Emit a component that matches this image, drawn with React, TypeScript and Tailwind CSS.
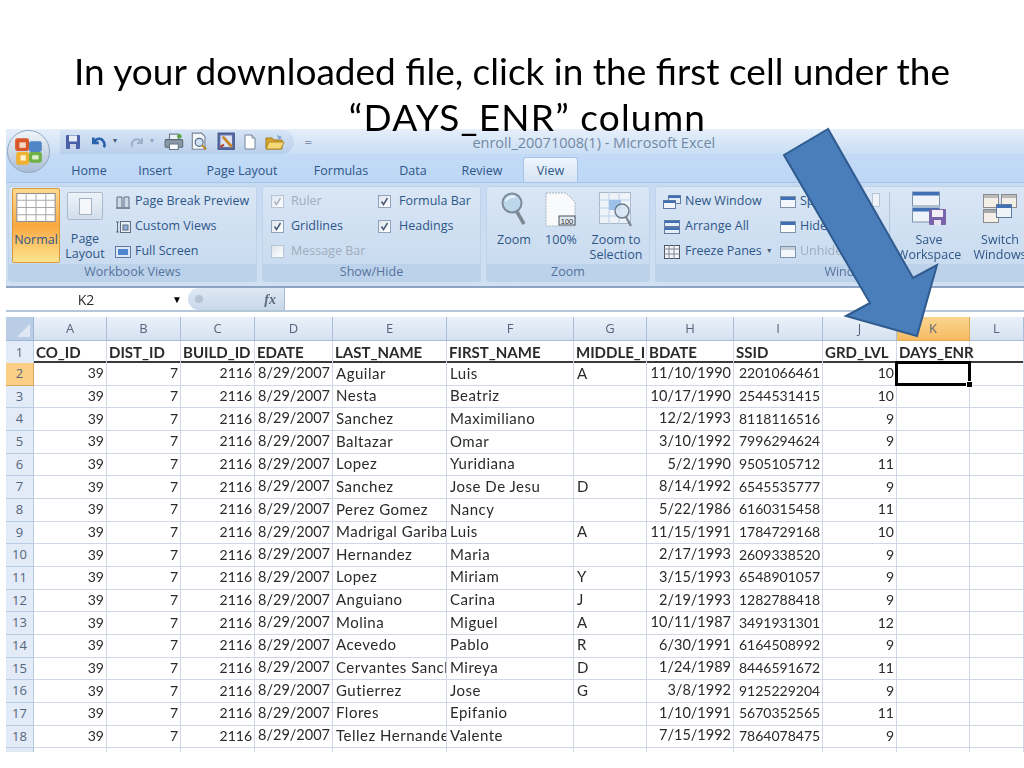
import type { ReactNode } from 'react';

const COLS = ['A', 'B', 'C', 'D', 'E', 'F', 'G', 'H', 'I', 'J', 'K', 'L'];
const HEAD = ['CO_ID', 'DIST_ID', 'BUILD_ID', 'EDATE', 'LAST_NAME', 'FIRST_NAME', 'MIDDLE_I', 'BDATE', 'SSID', 'GRD_LVL', 'DAYS_ENR', ''];
const GRID = 'grid grid-cols-[28px_73px_74px_74px_78px_114px_127px_73px_87px_89px_74px_73px_54px]';

// last, first, middle, birth date, ssid, grade
const ROWS: [string, string, string, string, string, string][] = [
  ['Aguilar', 'Luis', 'A', '11/10/1990', '2201066461', '10'],
  ['Nesta', 'Beatriz', '', '10/17/1990', '2544531415', '10'],
  ['Sanchez', 'Maximiliano', '', '12/2/1993', '8118116516', '9'],
  ['Baltazar', 'Omar', '', '3/10/1992', '7996294624', '9'],
  ['Lopez', 'Yuridiana', '', '5/2/1990', '9505105712', '11'],
  ['Sanchez', 'Jose De Jesu', 'D', '8/14/1992', '6545535777', '9'],
  ['Perez Gomez', 'Nancy', '', '5/22/1986', '6160315458', '11'],
  ['Madrigal Gariba', 'Luis', 'A', '11/15/1991', '1784729168', '10'],
  ['Hernandez', 'Maria', '', '2/17/1993', '2609338520', '9'],
  ['Lopez', 'Miriam', 'Y', '3/15/1993', '6548901057', '9'],
  ['Anguiano', 'Carina', 'J', '2/19/1993', '1282788418', '9'],
  ['Molina', 'Miguel', 'A', '10/11/1987', '3491931301', '12'],
  ['Acevedo', 'Pablo', 'R', '6/30/1991', '6164508992', '9'],
  ['Cervantes Sanchez', 'Mireya', 'D', '1/24/1989', '8446591672', '11'],
  ['Gutierrez', 'Jose', 'G', '3/8/1992', '9125229204', '9'],
  ['Flores', 'Epifanio', '', '1/10/1991', '5670352565', '11'],
  ['Tellez Hernandez', 'Valente', '', '7/15/1992', '7864078475', '9'],
];

function Icon({ w = 16, h = 16, s = 1, className = '', children }: { w?: number; h?: number; s?: number; className?: string; children: ReactNode }) {
  return (
    <svg width={w * s} height={h * s} viewBox={`0 0 ${w} ${h}`} className={`shrink-0 ${className}`}>
      {children}
    </svg>
  );
}

function OfficeButton() {
  return (
    <div className="w-[43px] h-[43px] rounded-full bg-gradient-to-b from-[#f1f5f9] to-[#a9bdd4] border border-[#8ea6c2] flex items-center justify-center">
      <svg width="32" height="32" viewBox="0 0 30 30">
        <rect x="2" y="2" width="13" height="12" rx="2" fill="#d9582a" />
        <rect x="15" y="5" width="12" height="10" rx="2" fill="#4f86c6" />
        <rect x="3" y="15" width="12" height="12" rx="2" fill="#f0b030" />
        <rect x="15" y="15" width="12" height="10" rx="2" fill="#6fb045" />
        <rect x="6" y="6" width="6" height="5" fill="#f6d9c8" />
        <rect x="7" y="18" width="5" height="5" fill="#fff3cf" />
        <rect x="18" y="18" width="6" height="4" fill="#dcefc8" />
      </svg>
    </div>
  );
}

function QuickAccess() {
  return (
    <div className="ml-[54px] h-[24px] w-[234px] rounded-r-[14px] bg-gradient-to-b from-[#d6e4f5] to-[#b9cfea] flex items-center">
      <Icon className="ml-[5px]">
        <rect x="1" y="1" width="14" height="14" rx="1" fill="#4a5fa8" />
        <rect x="4" y="1.5" width="8" height="6" fill="#e8eef8" />
        <rect x="5" y="10" width="6" height="5" fill="#c9d3e8" />
      </Icon>
      <Icon s={1.1} className="ml-[9px]">
        <path d="M3 4v5h5M3.5 8.5C6 4 11 4 13 9c.5 1.5.3 3-.5 4" fill="none" stroke="#2b62ad" strokeWidth="2.4" />
      </Icon>
      <span className="ml-[4px] text-[7px] text-[#4b5f7a]">▼</span>
      <Icon className="ml-[10px]">
        <path d="M13 4v5H8M12.5 8.5C10 4 5 4 3 9c-.5 1.5-.3 3 .5 4" fill="none" stroke="#9db0c8" strokeWidth="2" />
      </Icon>
      <span className="ml-[4px] text-[7px] text-[#94a6bd]">▼</span>
      <Icon w={18} s={1.1} className="ml-[9px]">
        <rect x="5" y="1" width="8" height="5" fill="#eef2f6" stroke="#6b7787" />
        <rect x="1" y="6" width="16" height="7" rx="1" fill="#8b98a6" stroke="#5e6a78" />
        <rect x="5" y="10" width="8" height="5" fill="#fff" stroke="#6b7787" />
        <circle cx="14" cy="3" r="2" fill="#58a13c" />
      </Icon>
      <Icon s={1.15} className="ml-[6px]">
        <path d="M2 1h8l3 3v11H2z" fill="#f6f7fa" stroke="#7a8698" />
        <circle cx="8" cy="9" r="3.5" fill="#cfe1f5" stroke="#546a86" />
        <path d="M10.5 11.5L14 15" stroke="#b88a2d" strokeWidth="2" />
      </Icon>
      <Icon s={1.15} className="ml-[8px]">
        <rect x="1" y="1" width="14" height="14" fill="#5c70aa" stroke="#3d4e82" />
        <rect x="3" y="3" width="10" height="10" fill="#dbe4f4" />
        <path d="M5 4l8 9" stroke="#c9862a" strokeWidth="2.5" />
        <path d="M3 13l3-2" stroke="#b9412a" strokeWidth="2" />
      </Icon>
      <Icon className="ml-[7px]">
        <path d="M3 1h7l3 3v11H3z" fill="#fff" stroke="#75839a" />
        <path d="M10 1v3h3" fill="#d6dde8" stroke="#75839a" />
      </Icon>
      <Icon w={20} className="ml-[7px]">
        <path d="M1 4h6l2 2h8v9H1z" fill="#d6a62e" stroke="#a57c1c" />
        <path d="M4 8h15l-3 7H1z" fill="#f6d877" stroke="#b08a28" />
        <path d="M12 1l5 2-3 3" fill="#7da7d8" />
      </Icon>
    </div>
  );
}

function Tab({ label, w, active }: { label: string; w: string; active?: boolean }) {
  return (
    <div
      className={`${w} h-[25px] pt-[3px] flex items-center justify-center text-[12.5px] text-[#2e5688] rounded-t-[3px] ${
        active ? 'bg-gradient-to-b from-[#eef5fd] to-[#d5e4f5] border border-b-0 border-[#a5c3e6]' : ''
      }`}
    >
      {label}
    </div>
  );
}

function Group({ label, w, children }: { label: string; w: string; children: ReactNode }) {
  return (
    <div className={`${w} shrink-0 h-[96px] flex flex-col rounded-[3px] border border-[#c0d2e7] bg-gradient-to-b from-[#d9e6f5] to-[#c6d9ef] overflow-hidden`}>
      <div className="h-[77px] flex">{children}</div>
      <div className="h-[17px] bg-[#bcd2ea] flex items-center justify-center text-[12.5px] leading-none text-[#56739c]">{label}</div>
    </div>
  );
}

function ListItem({ icon, label, dim }: { icon: ReactNode; label: string; dim?: boolean }) {
  return (
    <div className={`h-[25px] flex items-center gap-[4px] whitespace-nowrap text-[12.5px] ${dim ? 'text-[#9fadbe]' : 'text-[#2e5688]'}`}>
      {icon}
      <span>{label}</span>
    </div>
  );
}

function Check({ on, dim }: { on?: boolean; dim?: boolean }) {
  return (
    <div className={`w-[13px] h-[13px] border bg-gradient-to-br from-[#dfe6ef] to-white flex items-center justify-center ${dim ? 'border-[#b7c4d4]' : 'border-[#8fa3bc]'}`}>
      {on && (
        <svg width="9" height="9" viewBox="0 0 9 9">
          <path d="M1.5 4.5l2 3 4-6.5" fill="none" stroke={dim ? '#aab6c4' : '#4a5d78'} strokeWidth="1.5" />
        </svg>
      )}
    </div>
  );
}

function BigLabel({ lines, w }: { lines: string[]; w: string }) {
  return (
    <div className={`${w} text-center text-[12.5px] leading-[15px] text-[#2e5688] whitespace-nowrap`}>
      {lines.map((l) => (
        <div key={l}>{l}</div>
      ))}
    </div>
  );
}

function WinIcon({ head = '#3f6fb5', body = '#f3f6fb' }: { head?: string; body?: string }) {
  return (
    <Icon>
      <rect x="0.5" y="2.5" width="15" height="11" fill={body} stroke="#7f93ad" />
      <rect x="1" y="3" width="14" height="3" fill={head} />
    </Icon>
  );
}

function Ribbon() {
  return (
    <div className="h-[105px] bg-gradient-to-b from-[#c5dbf3] to-[#d0e0f2] flex gap-[5px] pl-[2px] pt-[3px] border-b-[2px] border-[#8da5c0]">
      <Group label="Workbook Views" w="w-[249px]">
        <div className="ml-[3px] mt-[1px] w-[48px] h-[75px] rounded-[2px] border border-[#d99a3c] bg-gradient-to-b from-[#fbd98f] via-[#f8a83e] to-[#fde38f] flex flex-col items-center">
          <svg width="40" height="29" viewBox="0 0 38 28" className="mt-[4px]">
            <rect x="0.5" y="0.5" width="37" height="27" fill="#fff" stroke="#8d8d8d" />
            <path d="M0 7h38M0 14h38M0 21h38M9.5 0v28M19 0v28M28.5 0v28" stroke="#a9a9a9" />
          </svg>
          <span className="mt-[9px] text-[12.5px] text-[#2e5688]">Normal</span>
        </div>
        <div className="ml-[5px] mt-[1px] w-[40px] flex flex-col items-center">
          <div className="mt-[4px] w-[36px] h-[28px] rounded-[2px] border border-[#aab9cb] bg-gradient-to-b from-[#eef3f9] to-[#d2deec] flex items-center justify-center">
            <div className="w-[13px] h-[17px] bg-[#f5f7fa] border border-[#a5b2c2]" />
          </div>
          <BigLabel lines={['Page', 'Layout']} w="mt-[11px]" />
        </div>
        <div className="ml-[10px] mt-[2px] flex flex-col">
          <ListItem
            label="Page Break Preview"
            icon={
              <Icon>
                <path d="M2 13V3h5v10M9 13V3h5v10" fill="#cfd9e6" stroke="#5d6c80" />
                <path d="M1 14h14" stroke="#5d6c80" strokeWidth="1.5" />
              </Icon>
            }
          />
          <ListItem
            label="Custom Views"
            icon={
              <Icon>
                <path d="M1 3h3M1 13h3M2.5 3v10" stroke="#5d6c80" />
                <rect x="5.5" y="2.5" width="10" height="11" fill="#e8eef6" stroke="#5d6c80" />
                <rect x="8" y="6" width="5" height="5" fill="#8fb0d8" stroke="#5d6c80" />
              </Icon>
            }
          />
          <ListItem
            label="Full Screen"
            icon={
              <Icon>
                <rect x="0.5" y="2.5" width="15" height="11" fill="#dfe8f4" stroke="#5d7aa5" />
                <rect x="3" y="5" width="10" height="6" fill="#4d86cf" />
              </Icon>
            }
          />
        </div>
      </Group>
      <Group label="Show/Hide" w="w-[219px]">
        <div className="ml-[8px] mt-[2px] w-[107px] flex flex-col">
          <ListItem dim label="Ruler" icon={<div className="mr-[3px]"><Check on dim /></div>} />
          <ListItem label="Gridlines" icon={<div className="mr-[3px]"><Check on /></div>} />
          <ListItem dim label="Message Bar" icon={<div className="mr-[3px]"><Check dim /></div>} />
        </div>
        <div className="mt-[2px] flex flex-col">
          <ListItem label="Formula Bar" icon={<div className="mr-[4px]"><Check on /></div>} />
          <ListItem label="Headings" icon={<div className="mr-[4px]"><Check on /></div>} />
        </div>
      </Group>
      <Group label="Zoom" w="w-[164px]">
        <div className="flex pt-[5px] pl-[8px]">
          <div className="w-[38px] flex flex-col items-center">
            <svg width="26" height="36" viewBox="0 0 26 36">
              <circle cx="11" cy="11" r="9.5" fill="#bcd6ea" stroke="#7d8b99" strokeWidth="2" />
              <path d="M5 9a7 6 0 0 1 9-4" fill="none" stroke="#eef6fb" strokeWidth="2" />
              <path d="M16 20l7 12" stroke="#7c8794" strokeWidth="3.5" />
            </svg>
            <BigLabel lines={['Zoom']} w="mt-[4px]" />
          </div>
          <div className="ml-[9px] w-[38px] flex flex-col items-center">
            <svg width="32" height="36" viewBox="0 0 32 36">
              <path d="M1 1h20l9 9v24H1z" fill="#f8fafc" stroke="#a9b3bf" strokeDasharray="2 1" />
              <rect x="14" y="24" width="16" height="9" fill="#e2e8ef" stroke="#4b5563" />
              <text x="22" y="31.5" textAnchor="middle" fontSize="7.5" fill="#333" fontFamily="'Liberation Sans', sans-serif">100</text>
            </svg>
            <BigLabel lines={['100%']} w="mt-[4px]" />
          </div>
          <div className="ml-[6px] w-[60px] flex flex-col items-center">
            <svg width="34" height="36" viewBox="0 0 34 36">
              <rect x="0.5" y="0.5" width="31" height="31" fill="#eef3f9" stroke="#a9b7c8" />
              <path d="M0 8h32M0 16h32M0 24h32M10 0v32M20 0v32" stroke="#bcd0e8" />
              <rect x="10" y="8" width="12" height="10" fill="#9cc0ea" />
              <circle cx="23" cy="19" r="7" fill="#d7e6f3" fillOpacity="0.8" stroke="#6e7c8b" strokeWidth="1.5" />
              <path d="M27 25l5 9" stroke="#7c8794" strokeWidth="2.5" />
            </svg>
            <BigLabel lines={['Zoom to', 'Selection']} w="mt-[4px]" />
          </div>
        </div>
      </Group>
      <Group label="Window" w="w-[386px]">
        <div className="ml-[7px] mt-[2px] w-[117px] flex flex-col">
          <ListItem
            label="New Window"
            icon={
              <Icon w={18}>
                <rect x="5.5" y="1.5" width="12" height="8" fill="#e4ecf6" stroke="#5d7aa5" />
                <rect x="6" y="2" width="11" height="2" fill="#3f6fb5" />
                <rect x="0.5" y="6.5" width="12" height="8" fill="#f2f5fa" stroke="#5d7aa5" />
                <rect x="1" y="7" width="11" height="2" fill="#3f6fb5" />
              </Icon>
            }
          />
          <ListItem
            label="Arrange All"
            icon={
              <Icon w={18}>
                <rect x="1.5" y="1.5" width="15" height="6" fill="#e4ecf6" stroke="#5d7aa5" />
                <rect x="2" y="2" width="14" height="2" fill="#3f6fb5" />
                <rect x="1.5" y="8.5" width="15" height="6" fill="#e4ecf6" stroke="#5d7aa5" />
                <rect x="2" y="9" width="14" height="2" fill="#3f6fb5" />
              </Icon>
            }
          />
          <div className="flex items-center">
            <ListItem
              label="Freeze Panes"
              icon={
                <Icon w={18}>
                  <rect x="1.5" y="1.5" width="15" height="13" fill="#f2f5fa" stroke="#4b5563" />
                  <path d="M1 5h16M1 10h16M6 1v14M11 1v14" stroke="#7d8794" />
                </Icon>
              }
            />
            <span className="ml-[4px] text-[7px] text-[#4b5f7a]">▼</span>
          </div>
        </div>
        <div className="mt-[2px] w-[92px] flex flex-col">
          <ListItem label="Split" icon={<WinIcon />} />
          <ListItem label="Hide" icon={<WinIcon body="#fbfcfe" />} />
          <ListItem dim label="Unhide" icon={<WinIcon head="#c5cdd8" />} />
        </div>
        <div className="mt-[6px] w-[8px] h-[14px] bg-[#eef3f9] border border-[#b6c4d5]" />
        <div className="ml-[9px] mt-[5px] h-[66px] w-px bg-[#b3c6dc]" />
        <div className="pt-[4px] flex">
          <div className="ml-[7px] w-[64px] flex flex-col items-center">
            <svg width="36" height="34" viewBox="0 0 36 34">
              <rect x="1.5" y="1" width="27" height="14" fill="#eef3f9" stroke="#7f93ad" />
              <rect x="2" y="1" width="26" height="3.5" fill="#3f6fb5" />
              <rect x="1.5" y="17" width="27" height="14" fill="#eef3f9" stroke="#7f93ad" />
              <rect x="2" y="17" width="26" height="3.5" fill="#3f6fb5" />
              <rect x="18" y="18" width="17" height="16" rx="1" fill="#7a62ad" />
              <rect x="21" y="19" width="11" height="7" fill="#f0edf7" />
              <rect x="23" y="29" width="7" height="5" fill="#e8e4f2" />
            </svg>
            <BigLabel lines={['Save', 'Workspace']} w="mt-[7px]" />
          </div>
          <div className="ml-[7px] w-[64px] flex flex-col items-center">
            <svg width="34" height="34" viewBox="0 0 34 34">
              <rect x="0.5" y="3.5" width="15" height="13" fill="#f3efe6" stroke="#8b8b8b" />
              <rect x="18.5" y="3.5" width="15" height="13" fill="#f3efe6" stroke="#8b8b8b" />
              <rect x="0.5" y="18.5" width="15" height="13" fill="#f3efe6" stroke="#8b8b8b" />
              <rect x="1" y="4" width="14" height="3" fill="#b9b9b9" />
              <rect x="19" y="4" width="14" height="3" fill="#b9b9b9" />
              <rect x="1" y="19" width="14" height="3" fill="#a8a8a8" />
              <rect x="13.5" y="13.5" width="15" height="13" fill="#eef3f9" stroke="#5d7aa5" />
              <rect x="14" y="14" width="14" height="3" fill="#3f6fb5" />
            </svg>
            <BigLabel lines={['Switch', 'Windows']} w="mt-[7px]" />
          </div>
        </div>
      </Group>
    </div>
  );
}

function FormulaBar() {
  return (
    <div className="h-[24px] flex bg-white border-b-[2px] border-[#b4c6da]">
      <div className="w-[182px] flex items-center text-[14px] text-[#2c2c2c]">
        <span className="w-[160px] pt-[1px] text-center">K2</span>
        <span className="ml-[6px] text-[10px] text-black">▼</span>
      </div>
      <div className="w-[97px] h-[22px] rounded-l-[12px] border-r border-[#a9bbd0] bg-gradient-to-b from-[#dfe8f4] to-[#c8d8ea] flex items-center justify-between pl-[7px] pr-[8px]">
        <span className="w-[8px] h-[8px] rounded-full bg-[#b9c4d1]" />
        <span className="font-['Liberation_Serif',serif] italic font-bold text-[14px] text-[#5a6a7c]">fx</span>
      </div>
    </div>
  );
}

function RowHead({ n, active }: { n: number; active?: boolean }) {
  return (
    <div
      className={`flex items-center justify-center font-['Open_Sans',sans-serif] text-[13px] text-[#56667a] border-r border-b ${
        active ? 'bg-[#fbcf85] border-[#e0a95a]' : 'bg-[#e2ebf7] border-[#b9cce3]'
      }`}
    >
      {n}
    </div>
  );
}

type CellProps = { children?: ReactNode; className?: string; selected?: boolean };

function Cell({ children, className = 'pl-[3px]', selected }: CellProps) {
  return (
    <div className={`relative flex items-center whitespace-nowrap border-r border-b border-[#d0d7e5] ${className} ${selected ? 'overflow-visible' : 'overflow-hidden'}`}>
      {children}
      {selected && (
        <div className="absolute z-10 -left-[2px] -top-[2px] -right-[2px] -bottom-px border-[3px] border-black">
          <div className="absolute -right-[5px] -bottom-[5px] w-[7px] h-[7px] bg-black border border-white" />
        </div>
      )}
    </div>
  );
}

const NUM = 'justify-end pr-[2px] pb-[2px]';
const DATE = 'justify-end pr-[2px] pb-[2px] text-[14.5px]';
const NAME = 'pl-[3px] pb-[2px] text-[15px] tracking-[0.5px]';

function Sheet() {
  return (
    <div className="font-['Lato',sans-serif] text-[14px] text-[#2a2a2a]">
      <div className={`${GRID} h-[24px] font-['Open_Sans',sans-serif] text-[13px] text-[#56667a]`}>
        <div className="bg-[#b9cde6] border-r border-b border-[#9fb6d3] flex items-end justify-end p-[3px]">
          <div className="w-0 h-0 border-l-[13px] border-l-transparent border-b-[13px] border-b-[#dfe8f3]" />
        </div>
        {COLS.map((c) => (
          <div
            key={c}
            className={`flex items-center justify-center border-r border-b ${
              c === 'K'
                ? 'bg-gradient-to-b from-[#fbd58f] to-[#f6bb62] border-[#e0a95a]'
                : 'bg-gradient-to-b from-[#eaf1fa] to-[#d5e1f0] border-[#a9bdd6]'
            }`}
          >
            {c}
          </div>
        ))}
      </div>
      <div className={`${GRID} h-[22px] border-b-[2px] border-[#3a3a3a]`}>
        <RowHead n={1} />
        {HEAD.map((h, i) => (
          <div
            key={i}
            className={`flex items-center pl-[2px] pb-[2px] text-[15px] font-bold whitespace-nowrap border-r border-[#d0d7e5] ${
              h === 'DAYS_ENR' ? 'overflow-visible relative z-10' : 'overflow-hidden'
            }`}
          >
            {h}
          </div>
        ))}
      </div>
      {ROWS.map((r, i) => (
        <div key={i} className={`${GRID} h-[22.66px]`}>
          <RowHead n={i + 2} active={i === 0} />
          <Cell className={NUM}>39</Cell>
          <Cell className={NUM}>7</Cell>
          <Cell className={NUM}>2116</Cell>
          <Cell className={DATE}>8/29/2007</Cell>
          <Cell className={NAME}>{r[0]}</Cell>
          <Cell className={NAME}>{r[1]}</Cell>
          <Cell className={NAME}>{r[2]}</Cell>
          <Cell className={DATE}>{r[3]}</Cell>
          <Cell className="pl-[5px] pb-[2px]">{r[4]}</Cell>
          <Cell className={NUM}>{r[5]}</Cell>
          <Cell selected={i === 0} />
          <Cell />
        </div>
      ))}
      <div className={`${GRID} h-[4px]`}>
        <div className="bg-[#dfe8f4] border-r border-[#a9bdd6]" />
        {COLS.map((c) => (
          <div key={c} className="border-r border-[#d0d7e5]" />
        ))}
      </div>
    </div>
  );
}

export default function App() {
  return (
    <div className="relative w-[1024px] h-[768px] overflow-hidden bg-white font-['Open_Sans',sans-serif]">
      <h1 className="relative z-10 h-[129px] pt-[48px] text-center font-['Lato',sans-serif] font-normal text-[37px] leading-[46px] text-black">
        In your downloaded file, click in the first cell under the
        <span className="block pl-[31px] tracking-[1.2px]">“DAYS_ENR” column</span>
      </h1>

      <div className="ml-[6px] blur-[0.35px]">
        <div className="h-[25px] relative bg-gradient-to-b from-[#e6effa] to-[#c9def5] flex items-center">
          <QuickAccess />
          <span className="ml-[11px] text-[9px] leading-none text-[#44546a]">═</span>
          <span className="ml-[161px] mt-[2px] text-[14.5px] text-[#7388a3] whitespace-nowrap">enroll_20071008(1) - Microsoft Excel</span>
          <div className="absolute left-[1px] top-[1px] z-10">
            <OfficeButton />
          </div>
        </div>
        <div className="h-[29px] bg-gradient-to-b from-[#c3dbf6] to-[#bcd6f5] flex items-end pl-[57px] border-b border-[#a9c4e4]">
          <Tab label="Home" w="w-[52px]" />
          <Tab label="Insert" w="w-[80px]" />
          <Tab label="Page Layout" w="w-[94px]" />
          <Tab label="Formulas" w="w-[104px]" />
          <Tab label="Data" w="w-[40px]" />
          <div className="w-[12px]" />
          <Tab label="Review" w="w-[74px]" />
          <div className="w-[4px]" />
          <Tab label="View" w="w-[55px]" active />
        </div>
        <Ribbon />
        <FormulaBar />
        <div className="h-[5px] bg-white" />
        <Sheet />
      </div>

      <svg width="1024" height="768" viewBox="0 0 1024 768" className="absolute left-0 top-0 z-20 pointer-events-none">
        <polygon
          points="828,129 784,155 870,303 846,316 917,336 937,265 913,278"
          fill="#4a7ebb"
          stroke="#2f5b8f"
          strokeWidth="2"
        />
      </svg>
    </div>
  );
}
